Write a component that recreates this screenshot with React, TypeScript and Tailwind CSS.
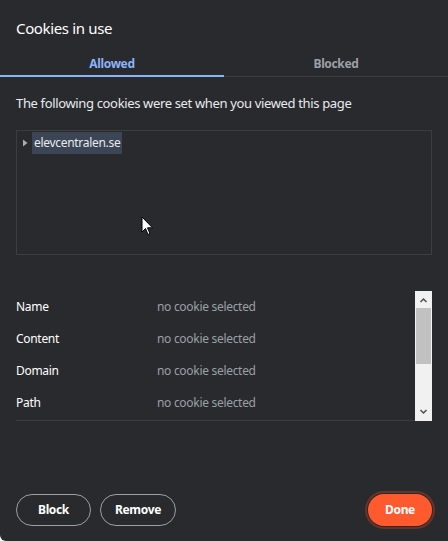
import { useState } from "react";

const campos = ["Name", "Content", "Domain", "Path"];

function Cursor() {
  return (
    <svg width="13" height="20" viewBox="0 0 13 20" className="absolute left-[141px] top-[216px]">
      <path d="M1 1 L1 16 L4.5 12.5 L7 18.5 L9 17.5 L6.5 11.8 L11.5 11.8 Z" fill="#fff" stroke="#000" strokeWidth="1" />
    </svg>
  );
}

export default function App() {
  const [aba, setAba] = useState("allowed");

  return (
    <div
      className="relative w-[448px] h-[541px] bg-[#292a2e] text-[#e8eaed] overflow-hidden rounded-bl-md flex flex-col tracking-[-0.35px]"
      style={{ fontFamily: '"Noto Sans", "Open Sans", sans-serif' }}
    >
      <h1 className="px-4 pt-[16px] h-[50px] text-[15px] leading-[24px] text-white">Cookies in use</h1>

      <div className="flex h-[27px] border-b border-[#3c3d41]">
        <button
          onClick={() => setAba("allowed")}
          className={`w-1/2 text-[12px] font-bold pt-[2px] ${aba === "allowed" ? "text-[#8ab4f8] border-b-2 border-[#8ab4f8] -mb-px" : "text-[#9aa0a6]"}`}
        >
          Allowed
        </button>
        <button
          onClick={() => setAba("blocked")}
          className={`w-1/2 text-[12px] font-bold pt-[2px] ${aba === "blocked" ? "text-[#8ab4f8] border-b-2 border-[#8ab4f8] -mb-px" : "text-[#9aa0a6]"}`}
        >
          Blocked
        </button>
      </div>

      <p className="px-4 pt-[17px] h-[53px] text-[13px] leading-[18px]">The following cookies were set when you viewed this page</p>

      <div className="mx-4 h-[125px] border border-[#3c3d41] pt-px pl-[4px]">
        <div className="flex items-center h-[22px]">
          <svg width="10" height="10" viewBox="0 0 10 10" className="mr-[1px]">
            <path d="M2 1.5 L6.5 5 L2 8.5 Z" fill="#a8abb0" />
          </svg>
          <span className="bg-[#3c4555] h-[22px] px-[2px] text-[12px] leading-[22px] tracking-[-0.3px]">elevcentralen.se</span>
        </div>
      </div>

      <div className="mx-4 mt-[36px] h-[130px] flex">
        <div className="flex-1 border-b border-[#3c3d41]">
          {campos.map((c) => (
            <div key={c} className="flex h-[32px] items-center text-[12px] tracking-[-0.3px]">
              <div className="w-[141px] text-white">{c}</div>
              <div className="text-[#9aa0a6]">no cookie selected</div>
            </div>
          ))}
        </div>
        <div className="w-[17px] bg-[#f1f1f1] flex flex-col items-center">
          <svg width="9" height="17" viewBox="0 0 9 17">
            <path d="M1.5 11 L4.5 8 L7.5 11" fill="none" stroke="#505050" strokeWidth="1.5" />
          </svg>
          <div className="w-[15px] h-[56px] bg-[#c1c1c1]" />
          <div className="flex-1" />
          <svg width="9" height="17" viewBox="0 0 9 17">
            <path d="M1.5 6 L4.5 9 L7.5 6" fill="none" stroke="#505050" strokeWidth="1.5" />
          </svg>
        </div>
      </div>

      <div className="flex items-center gap-[9px] px-4 mt-[73px]">
        <button className="h-[32px] w-[75px] rounded-full border border-[#9aa0a6] text-[12px] font-bold text-white">Block</button>
        <button className="h-[32px] w-[76px] rounded-full border border-[#9aa0a6] text-[12px] font-bold text-white">Remove</button>
        <div className="flex-1" />
        <button className="h-[32px] w-[64px] rounded-full bg-[#ff5a2e] text-[12px] font-bold text-white ring-2 ring-[#6b3325] ring-offset-1 ring-offset-[#292a2e]">Done</button>
      </div>

      <Cursor />
    </div>
  );
}
